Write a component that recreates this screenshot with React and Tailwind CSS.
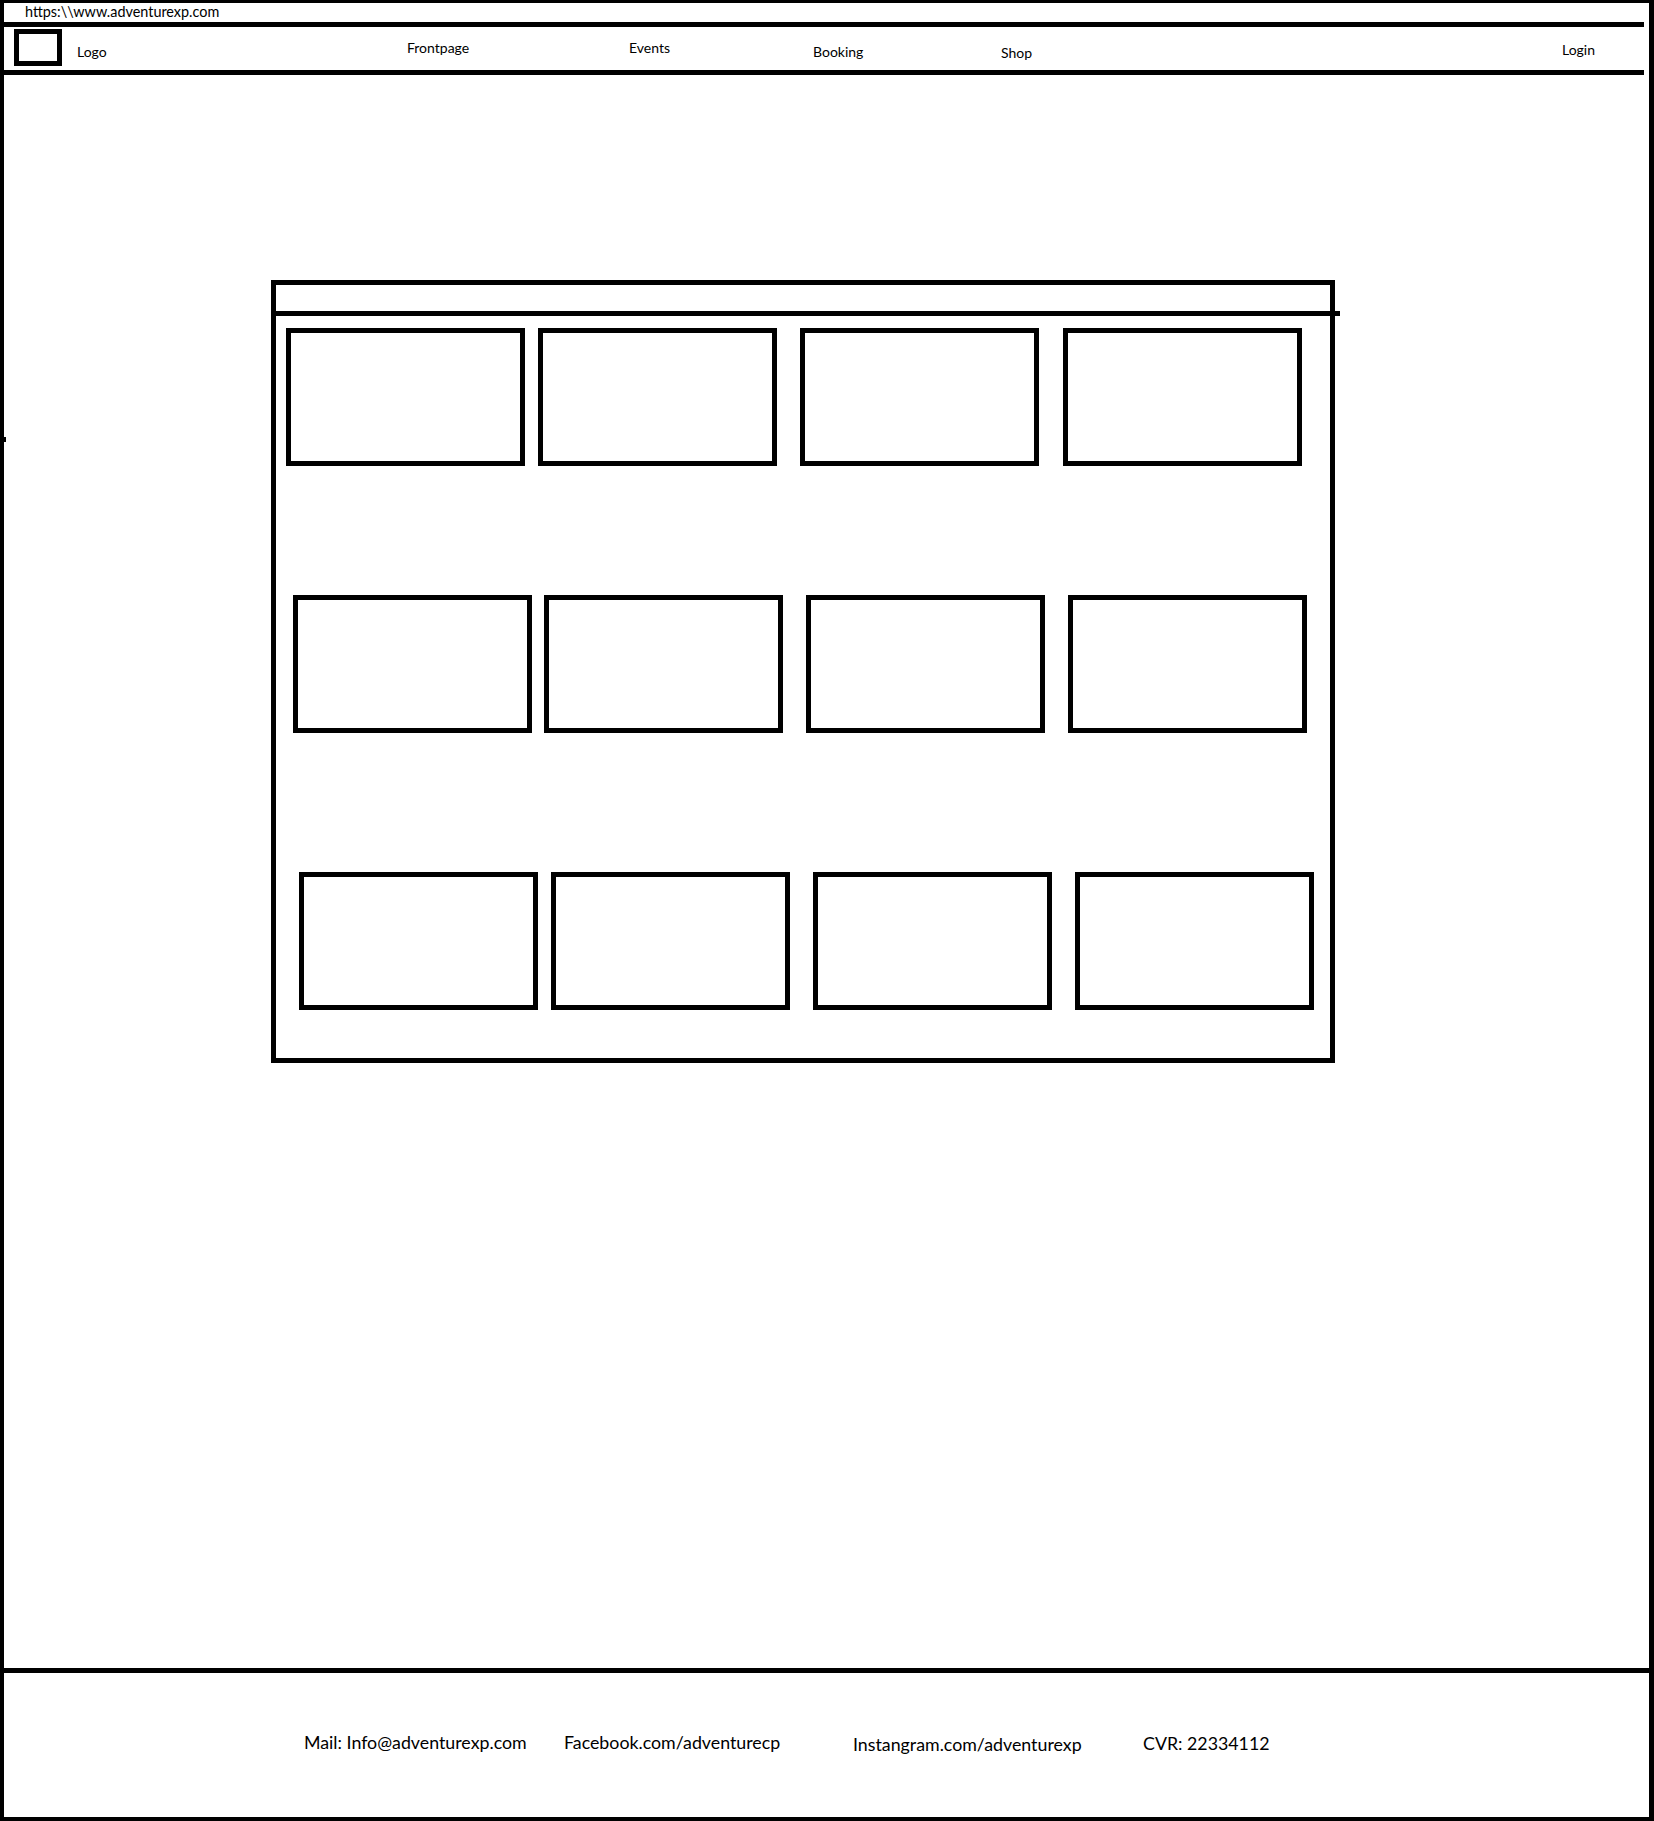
const navItems = [
  { label: 'Logo', box: 'w-[330px] mt-[16px]' },
  { label: 'Frontpage', box: 'w-[222px] mt-[12px]' },
  { label: 'Events', box: 'w-[184px] mt-[12px]' },
  { label: 'Booking', box: 'w-[188px] mt-[16px]' },
  { label: 'Shop', box: 'w-[561px] mt-[17px]' },
  { label: 'Login', box: 'mt-[14px]' },
];

// each row of tiles is drawn a bit further right, like the sketch
const rows = [
  { pad: 'pl-[10px] mt-[12px]', gaps: ['', 'ml-[13px]', 'ml-[23px]', 'ml-[24px]'] },
  { pad: 'pl-[17px] mt-[129px]', gaps: ['', 'ml-[12px]', 'ml-[23px]', 'ml-[23px]'] },
  { pad: 'pl-[23px] mt-[139px]', gaps: ['', 'ml-[13px]', 'ml-[23px]', 'ml-[23px]'] },
];

const footerLinks = [
  { text: 'Mail: Info@adventurexp.com', box: 'w-[260px]' },
  { text: 'Facebook.com/adventurecp', box: 'w-[289px]' },
  { text: 'Instangram.com/adventurexp', box: 'w-[290px] mt-[3px]' },
  { text: 'CVR: 22334112', box: 'mt-[1px]' },
];

function Tile({ extra }) {
  return <div className={`w-[239px] h-[138px] border-[5px] border-black shrink-0 ${extra}`}></div>;
}

export default function App() {
  return (
    <div className="relative w-[1654px] h-[1821px] bg-white text-black border-t-[3px] border-l-[4px] border-r-[5px] border-b-[4px] border-black flex flex-col font-['Lato',sans-serif] overflow-hidden">
      {/* stray mark on the left edge */}
      <span className="absolute left-0 top-[434px] w-[2px] h-[5px] bg-black"></span>

      {/* Address bar */}
      <div className="h-[19px] pl-[21px] flex items-center text-[14.4px] leading-none">
        https:\\www.adventurexp.com
      </div>
      <div className="w-[1640px] h-[5px] bg-black"></div>

      {/* Nav */}
      <div className="h-[43px] flex items-start text-[14px] leading-[17px]">
        <div className="ml-[10px] mt-[2px] w-[48px] h-[37px] border-[5px] border-black shrink-0 mr-[15px]"></div>
        {navItems.map((item) => (
          <span key={item.label} className={`shrink-0 ${item.box}`}>
            {item.label}
          </span>
        ))}
      </div>
      <div className="w-[1640px] h-[5px] bg-black"></div>

      {/* Main */}
      <main className="flex-1 pt-[205px] pl-[267px]">
        <div className="w-[1064px] h-[783px] border-[5px] border-black">
          <div className="h-[26px]"></div>
          <div className="w-[1064px] h-[5px] bg-black"></div>
          {rows.map((row, r) => (
            <div key={r} className={`flex ${row.pad}`}>
              {row.gaps.map((g, i) => (
                <Tile key={i} extra={g} />
              ))}
            </div>
          ))}
        </div>
      </main>

      {/* Footer */}
      <div className="h-[5px] w-full bg-black"></div>
      <footer className="h-[144px] pl-[300px] pb-[6px] flex items-center text-[17.8px] leading-[22px]">
        {footerLinks.map((f) => (
          <span key={f.text} className={`shrink-0 ${f.box}`}>
            {f.text}
          </span>
        ))}
      </footer>
    </div>
  );
}
